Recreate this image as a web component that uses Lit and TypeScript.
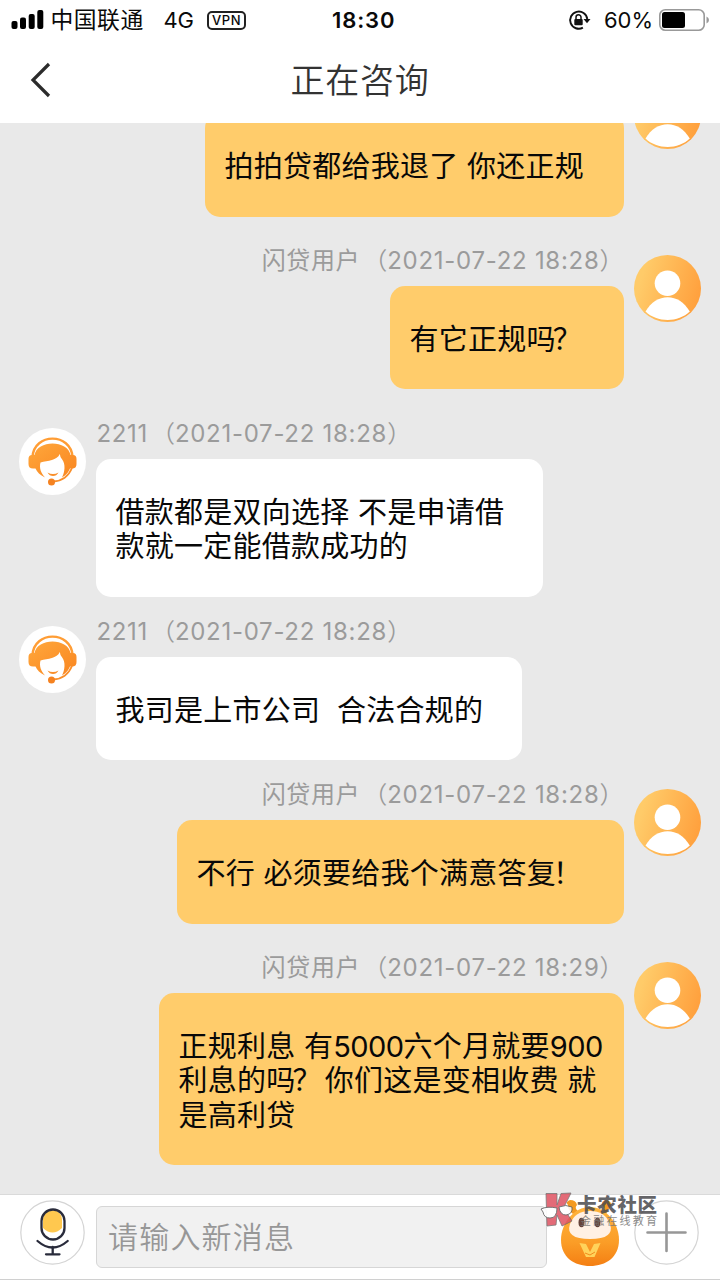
import { LitElement, html, css } from "lit";
import { customElement, property } from "lit/decorators.js";

interface Message {
  mine: boolean;
  name: string;
  time: string;
  lines: string[];
  width: number;
  gap: number;
}

const MESSAGES: Message[] = [
  { mine: true, name: "闪贷用户", time: "2021-07-22 18:28", lines: ["拍拍贷都给我退了 你还正规"], width: 419, gap: 38 },
  { mine: true, name: "闪贷用户", time: "2021-07-22 18:28", lines: ["有它正规吗？"], width: 234, gap: 38.5 },
  { mine: false, name: "2211", time: "2021-07-22 18:28", lines: ["借款都是双向选择 不是申请借", "款就一定能借款成功的"], width: 447, gap: 29 },
  { mine: false, name: "2211", time: "2021-07-22 18:28", lines: ["我司是上市公司  合法合规的"], width: 426, gap: 29 },
  { mine: true, name: "闪贷用户", time: "2021-07-22 18:28", lines: ["不行 必须要给我个满意答复！"], width: 447, gap: 38 },
  { mine: true, name: "闪贷用户", time: "2021-07-22 18:29", lines: ["正规利息 有5000六个月就要900", "利息的吗？你们这是变相收费 就", "是高利贷"], width: 465, gap: 0 },
];

const userAvatar = html`<svg width="67" height="67" viewBox="0 0 67 67">
  <defs><linearGradient id="ug" x1="0" y1="0.35" x2="1" y2="0.65">
    <stop offset="0.1" stop-color="#ffcb69" /><stop offset="1" stop-color="#ff9f3c" />
  </linearGradient></defs>
  <circle cx="33.5" cy="33.5" r="33.5" fill="url(#ug)" />
  <circle cx="33.5" cy="28.3" r="12.8" fill="#fff" />
  <path d="M11.5 56.5C17 47 25 42.2 33.7 42.2S50 47 55.8 56.5C50 62 42 65 33.7 65S17 62 11.5 56.5Z" fill="#fff" />
</svg>`;

const agentAvatar = html`<svg width="67" height="67" viewBox="0 0 67 67">
  <defs><linearGradient id="ag" x1="0" y1="0" x2="1" y2="1">
    <stop offset="0" stop-color="#ffa83c" /><stop offset="1" stop-color="#f98520" />
  </linearGradient></defs>
  <circle cx="33.5" cy="33.5" r="33.5" fill="#fff" />
  <path d="M13.5 29C15 4.500 52 4.500 53.5 29" fill="none" stroke="#ff9d35" stroke-width="2.400" />
  <path d="M15.500 27C18 11.500 49 11.500 51.500 27H54Q57.500 27 57.500 31V36Q57.500 40 54 40.500H51C49 45 47 47 43 49.500C46 44 46.500 36 43.500 32Q41 29.500 40.800 26C38 32.500 29 32.500 21.500 34.500C20 40 22 45 26 49.500C21 47 18 44 16.500 40.500H14Q9.500 40.500 9.500 36V31Q9.500 27 13 27Z" fill="url(#ag)" />
  <path d="M28.500 44.500Q34 47.500 39.500 44.500Q37.500 48 34 48Q30.500 48 28.500 44.500Z" fill="#f98f2b" />
  <path d="M53 40C49.500 48.500 43 53 34 53.500" fill="none" stroke="#f98f2b" stroke-width="1.800" />
  <circle cx="32.500" cy="54" r="3.500" fill="#f58220" />
</svg>`;

@customElement("status-bar")
class StatusBar extends LitElement {
  static styles = css`
    :host { display: grid; grid-template-columns: 1fr 66px 1fr; height: 40px; align-items: center; font: 22px/40px Inter, "Noto Sans CJK SC", sans-serif; color: #0a0a0a; }
    .side { display: flex; align-items: center; height: 40px; }
    .signal { margin-left: 11px; flex: none; }
    .carrier { margin-left: 6.500px; width: 113px; letter-spacing: 0.500px; font-size: 22.800px; white-space: nowrap; }
    .net { width: 43.500px; letter-spacing: -0.300px; }
    .vpn { box-sizing: border-box; width: 39px; height: 19px; border: 2px solid #222; border-radius: 5px; font: 500 13px/15px Inter, sans-serif; text-align: center; letter-spacing: 0.600px; }
    .clock { font-weight: 600; letter-spacing: 0.900px; padding-left: 5px; text-align: center; white-space: nowrap; }
    .right { justify-content: flex-end; }
    .pct { margin: 0 6px 0 13px; letter-spacing: 0; }
    .batt { margin-right: 10px; flex: none; }
  `;
  render() {
    return html`
      <div class="side">
        <svg class="signal" width="33" height="20" viewBox="0 0 33 20">
          <rect x="0.500" y="11" width="6" height="8" rx="2" /><rect x="9" y="7.500" width="6" height="11.500" rx="2" />
          <rect x="17.700" y="4" width="6" height="15" rx="2" /><rect x="26.300" y="0" width="6" height="19" rx="2" />
        </svg>
        <span class="carrier">中国联通</span><span class="net">4G</span><span class="vpn">VPN</span>
      </div>
      <div class="clock">18:30</div>
      <div class="side right">
        <svg width="23" height="22" viewBox="0 0 23 22">
          <path d="M14.900 18.700A8.600 8.600 0 1 1 19.300 10" fill="none" stroke="#111" stroke-width="1.900" />
          <path d="M15.500 10H22.500L19 14.300Z" fill="#111" />
          <rect x="6.300" y="10" width="8.400" height="6.200" rx="1" fill="#111" />
          <path d="M8 10.500V8.200a2.500 2.500 0 0 1 5 0V10.500" fill="none" stroke="#111" stroke-width="1.500" />
        </svg>
        <span class="pct">60%</span>
        <svg class="batt" width="51" height="22" viewBox="0 0 51 22">
          <rect x="0.800" y="0.800" width="44.400" height="20.400" rx="5.500" fill="none" stroke="#999" stroke-width="1.600" />
          <rect x="3" y="3" width="23" height="16" rx="2.500" fill="#000" />
          <path d="M47.500 7.500Q50 8.500 50 11T47.500 14.500Z" fill="#999" />
        </svg>
      </div>`;
  }
}

@customElement("chat-message")
class ChatMessage extends LitElement {
  @property({ attribute: false }) message!: Message;
  static styles = css`
    .row { display: flex; align-items: flex-start; gap: 10px; padding: 0 19px; }
    .mine { flex-direction: row-reverse; }
    .avatar { width: 67px; height: 67px; flex: none; }
    .avatar svg { display: block; }
    .body { display: flex; flex-direction: column; align-items: flex-start; }
    .mine .body { align-items: flex-end; }
    .meta { height: 31px; line-height: 12px; font-family: Inter, "Noto Sans CJK SC", sans-serif; font-size: 24px; color: #9b9b9b; white-space: nowrap; display: flex; }
    .who { letter-spacing: 0.650px; padding-left: 0.500px; }
    .time { letter-spacing: 0.720px; }
    .p { font-family: "Noto Sans CJK SC", sans-serif; font-weight: 350; width: 24.500px; line-height: 8px; }
    .open { width: 27px; text-align: right; }
    .bubble { box-sizing: border-box; padding: 37px 0 32px 19.500px; border-radius: 15px; background: #fff; color: #080808; font: 29px/34.500px Inter, "Noto Sans CJK SC", sans-serif; letter-spacing: 0.250px; white-space: pre; }
    .mine .bubble { background: #ffcc6b; }
    .num { letter-spacing: -0.550px; }
    .punct { margin: 0 3px 0 -3px; }
  `;
  private line(text: string) {
    return text.split(/(\d+|[？！])/).map((t) => {
      if (/^\d/.test(t)) return html`<span class="num">${t}</span>`;
      if (/^[？！]/.test(t)) return html`<span class="punct">${t}</span>`;
      return t;
    });
  }
  render() {
    const m = this.message;
    return html`<div class="row ${m.mine ? "mine" : ""}" style="margin-bottom:${m.gap}px">
      <div class="avatar">${m.mine ? userAvatar : agentAvatar}</div>
      <div class="body">
        <div class="meta"><span class="who">${m.name}</span><span class="p open">（</span><span class="time">${m.time}</span><span class="p">）</span></div>
        <div class="bubble" style="width:${m.width}px">${m.lines.map((l) => html`<div>${this.line(l)}</div>`)}</div>
      </div>
    </div>`;
  }
}

@customElement("message-bar")
class MessageBar extends LitElement {
  static styles = css`
    :host { display: flex; box-sizing: border-box; height: 86px; border-top: 1px solid #dadada; border-bottom: 1px solid #d0d0d0; background: #fff; padding: 4.500px 20px 0; }
    svg { display: block; flex: none; }
    .input { box-sizing: border-box; width: 451px; height: 62px; margin: 6.500px 14px 0 11px; border: 1px solid #d6d6d6; border-radius: 6px; background: #f1f1f1; color: #979797; font: 30px/57px "Noto Sans CJK SC", sans-serif; font-weight: 350; letter-spacing: 1.200px; padding-left: 11px; white-space: nowrap; }
    .mascot { margin: 0 15px 0 -4px; }
  `;
  render() {
    return html`
      <svg width="65" height="65" viewBox="0 0 65 65">
        <circle cx="32.500" cy="32.500" r="31.700" fill="#fff" stroke="#d4d4d4" stroke-width="1.200" />
        <path d="M23 19.500a9.500 9.500 0 0 1 19 0V28Q32.500 37 23 28Z" fill="#ffc84f" />
        <rect x="21.500" y="9.500" width="23" height="30" rx="11.500" fill="none" stroke="#292b3b" stroke-width="2.300" />
        <path d="M17.500 41Q32.500 54 47.700 41" fill="none" stroke="#292b3b" stroke-width="2.300" stroke-linecap="round" />
        <path d="M32.700 47V54M26 54.300H39.500" fill="none" stroke="#292b3b" stroke-width="2.300" stroke-linecap="round" />
      </svg>
      <div class="input">请输入新消息</div>
      <svg class="mascot" width="62" height="68" viewBox="0 0 62 68">
        <defs><linearGradient id="mg" x1="0" y1="0" x2="0" y2="1"><stop offset="0" stop-color="#ffb43b" /><stop offset="0.600" stop-color="#fb9d27" /><stop offset="1" stop-color="#f47f13" /></linearGradient></defs>
        <path d="M16 14Q10 9 11 5Q8 2 13 0Q19 0 20 5Q17 8 21 11ZM46 11Q49 8 45 5Q44 1 49 0Q55 1 54 6Q51 9 49 14Z" fill="#f49a21" />
        <path d="M33 7C49 7 62 23 62 40C62 57 49 66 33 66S4 57 4 40C4 23 17 7 33 7Z" fill="url(#mg)" />
        <path d="M13 24Q18 11 33 11T53 24Q58 39 33 39T13 24Z" fill="#fff0e4" />
        <ellipse cx="24.500" cy="22.500" rx="3" ry="4.800" fill="#66433a" /><ellipse cx="40.500" cy="22.500" rx="3" ry="4.800" fill="#66433a" />
        <path d="M22.500 43L29 44L33 52L37 44L43.500 43L37.500 57H29Z" fill="#ffd35b" /><path d="M28 53L33 55L38 52" fill="none" stroke="#f28b1c" />
      </svg>
      <svg width="65" height="65" viewBox="0 0 65 65">
        <circle cx="32.500" cy="32.500" r="31.700" fill="#fff" stroke="#d4d4d4" stroke-width="1.200" />
        <path d="M32.500 13.500V51M13.500 32.500H51.500" stroke="#979797" stroke-width="2.600" stroke-linecap="round" />
      </svg>`;
  }
}

@customElement("app-root")
class AppRoot extends LitElement {
  static styles = css`
    :host { display: flex; flex-direction: column; position: relative; width: 720px; height: 1280px; overflow: hidden; background: #fff; }
    .title-bar { display: grid; grid-template-columns: 82px 1fr 82px; height: 83px; flex: none; align-items: center; }
    .title-bar svg { margin: -4px 0 0 29px; }
    .title { text-align: center; font: 34px/80px "Noto Sans CJK SC", sans-serif; font-weight: 350; letter-spacing: 0.800px; color: #333; margin-top: -5px; }
    .chat { flex: 1; min-height: 0; overflow: hidden; background: #e9e9e9; }
    .thread { margin-top: -40.800px; }
    message-bar { flex: none; }
    .mark { position: absolute; left: 540px; top: 1190px; display: flex; opacity: 0.860; }
    .brand { display: flex; flex-direction: column; margin-left: 1px; white-space: nowrap; font-family: "Noto Sans CJK SC", sans-serif; color: #4c4c50; }
    .big { font-size: 19.500px; line-height: 27px; font-weight: 900; letter-spacing: 0.700px; }
    .small { font-size: 11px; line-height: 7px; letter-spacing: 2.200px; color: #777; padding-left: 3px; }
  `;
  render() {
    return html`
      <status-bar></status-bar>
      <div class="title-bar">
        <svg width="22" height="36" viewBox="0 0 22 36"><path d="M20 2L4 18L20 34" fill="none" stroke="#2b2b2b" stroke-width="3.200" /></svg>
        <div class="title">正在咨询</div>
      </div>
      <div class="chat"><div class="thread">${MESSAGES.map((m) => html`<chat-message .message=${m}></chat-message>`)}</div></div>
      <message-bar></message-bar>
      <div class="mark">
        <svg width="36" height="38" viewBox="0 0 36 38">
          <path d="M6 3.500H17V15L21 3.500L31 3L23.500 18L32 31L22 36L17 25L16 35L7 36Z" fill="#df5362" stroke="#666" stroke-width="0.800" />
          <path d="M1 19Q7 16 17 18Q17 28 10 28Q4 28 3 22ZM19 17Q26 14 32 17Q33 24 26 25Q20 25 19 17Z" fill="#fff" stroke="#555" stroke-width="0.900" />
        </svg>
        <div class="brand"><span class="big">卡农社区</span><span class="small">金融在线教育</span></div>
      </div>`;
  }
}
